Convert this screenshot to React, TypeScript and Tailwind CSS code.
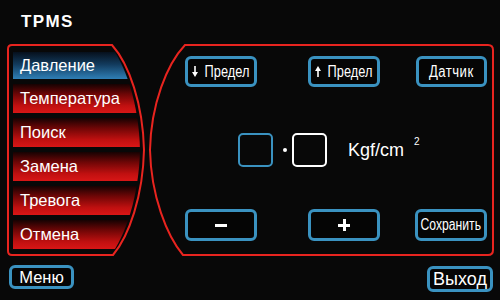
import React from "react";

const font = "font-['Liberation_Sans',Arial,sans-serif]";

function Arrow({ up }: { up?: boolean }) {
  return (
    <svg width="6" height="11" viewBox="0 0 6 11" className={up ? "rotate-180" : ""}>
      <line x1="3" y1="0" x2="3" y2="7" stroke="white" strokeWidth="1.6" />
      <polygon points="0,6 6,6 3,11" fill="white" />
    </svg>
  );
}

function Btn({ className = "", children }: { className?: string; children: React.ReactNode }) {
  return (
    <div
      className={`flex items-center justify-center rounded-[6px] border-[3px] border-[#3a92c0] bg-[#050505] text-white ${className}`}
    >
      {children}
    </div>
  );
}

const items = ["Температура", "Поиск", "Замена", "Тревога", "Отмена"];

export default function App() {
  return (
    <div className={`w-[500px] h-[300px] bg-[#080808] text-white overflow-hidden ${font}`}>
      <div className="h-[44px] pl-[21px] pt-[13px]">
        <div className="text-[17px] leading-[17px] font-bold tracking-[1.4px]">TPMS</div>
      </div>

      <div className="flex h-[212px]">
        {/* Left menu panel */}
        <div className="relative ml-[7px] w-[139px] h-[212px] shrink-0">
          <svg className="absolute inset-0" width="139" height="212" viewBox="0 0 139 212">
            <path
              d="M5,1 H105 C122,20 136,60 137,106 C136,152 122,192 106,211 H5 Q1,211 1,207 V5 Q1,1 5,1 Z"
              fill="none"
              stroke="#e8241f"
              strokeWidth="2"
            />
          </svg>
          <div className="h-full pt-[8px] pl-[6px] flex flex-col gap-[5px] [clip-path:path('M0,0_H102_C118,19_132,59_133,106_C132,153_118,193_103,212_H0_Z')]">
            <div className="h-[27px] flex items-center pl-[7px] text-[16.5px] bg-[linear-gradient(to_bottom,#06101c_0%,#123a5c_45%,#2f7fb6_100%)]">
              Давление
            </div>
            {items.map((t) => (
              <div
                key={t}
                className="h-[29px] flex items-center pl-[7px] text-[16.5px] bg-[linear-gradient(to_bottom,#160202_0%,#6e0606_35%,#c01010_75%,#d81616_100%)]"
              >
                {t}
              </div>
            ))}
          </div>
        </div>

        {/* Right panel */}
        <div className="relative ml-[3px] w-[345px] h-[212px] shrink-0">
          <svg className="absolute inset-0" width="345" height="212" viewBox="0 0 345 212">
            <path
              d="M36,1 H339 Q344,1 344,6 V206 Q344,211 339,211 H34 C18,192 2,152 1,106 C2,60 18,20 36,1 Z"
              fill="none"
              stroke="#e8241f"
              strokeWidth="2"
            />
          </svg>
          <div className="relative flex flex-col pt-[12px] pl-[36px]">
            <div className="flex h-[31px]">
              <Btn className="w-[72px] gap-[6px]">
                <Arrow />
                <span className="inline-block text-[16px] scale-x-[0.8] -mx-[5px]">Предел</span>
              </Btn>
              <Btn className="w-[72px] gap-[6px] ml-[51px]">
                <Arrow up />
                <span className="inline-block text-[16px] scale-x-[0.8] -mx-[5px]">Предел</span>
              </Btn>
              <Btn className="w-[71px] ml-[36px]">
                <span className="inline-block text-[16px] scale-x-[0.82] tracking-[0.6px]">Датчик</span>
              </Btn>
            </div>

            <div className="flex h-[34px] mt-[46px] items-center">
              <div className="ml-[53px] w-[35px] h-[34px] rounded-[5px] border-[2px] border-[#3a92c0]" />
              <div className="ml-[10px] w-[4px] h-[4px] rounded-full bg-white" />
              <div className="ml-[5px] w-[35px] h-[34px] rounded-[5px] border-[2px] border-white" />
              <div className="ml-[21px] text-[18px] leading-none">Kgf/cm</div>
              <div className="ml-[10px] self-start mt-[4px] text-[10px] leading-none">2</div>
            </div>

            <div className="flex h-[32px] mt-[42px]">
              <Btn className="w-[72px]">
                <div className="w-[12px] h-[3px] bg-white" />
              </Btn>
              <Btn className="w-[72px] ml-[51px]">
                <div className="relative w-[12px] h-[12px]">
                  <div className="absolute left-0 top-[4.5px] w-[12px] h-[3px] bg-white" />
                  <div className="absolute top-0 left-[4.5px] w-[3px] h-[12px] bg-white" />
                </div>
              </Btn>
              <Btn className="w-[72px] ml-[35px]">
                <span className="inline-block text-[16px] scale-x-[0.76] -mx-[10px]">Сохранить</span>
              </Btn>
            </div>
          </div>
        </div>
      </div>

      <div className="flex justify-between items-start mt-[9px] pl-[9px] pr-[7px]">
        <Btn className="w-[65px] h-[24px] text-[16.5px]">Меню</Btn>
        <Btn className="w-[66px] h-[26px] text-[18px] mt-[1px]">Выход</Btn>
      </div>
    </div>
  );
}
